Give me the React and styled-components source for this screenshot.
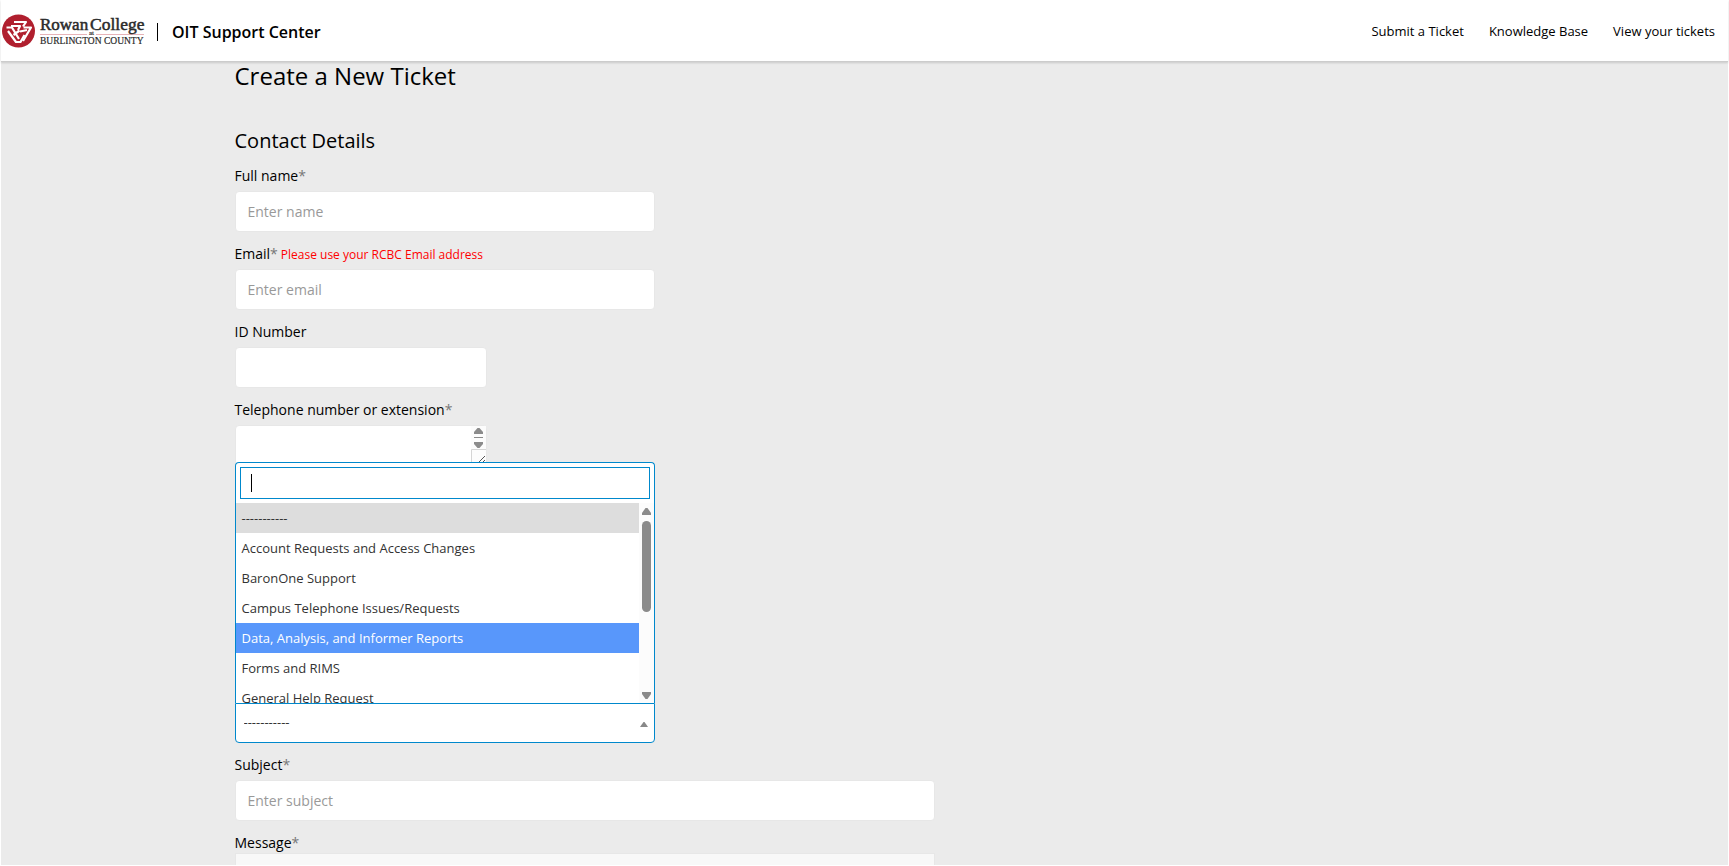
import React from "react";
import styled, { createGlobalStyle } from "styled-components";

const GlobalStyle = createGlobalStyle`
  *, *::before, *::after { box-sizing: border-box; }
  body { margin: 0; background: #fff; }
  body, input, textarea, select { font-family: "Open Sans", sans-serif; }
`;

const Page = styled.div`
  height: 100vh;
  overflow: hidden;
  display: flex;
  flex-direction: column;
  padding: 0 1px 1px;
  color: #000;
  font-size: 14px;
`;

const Header = styled.header`
  flex: none;
  height: 62px;
  display: flex;
  align-items: center;
  justify-content: space-between;
  padding-right: 13px;
  background: #fff;
  border-bottom: 1px solid #ccc;
  box-shadow: 0 1px 2px rgba(0, 0, 0, 0.15);
  z-index: 1;
`;

const Brand = styled.div`
  display: flex;
  align-items: center;
`;

const LogoLink = styled.a`
  display: block;
  height: 34px;
`;

const Divider = styled.span`
  width: 1px;
  height: 18px;
  margin: 2px 14px 0 12px;
  background: #000;
`;

const BrandName = styled.span`
  font-size: 16px;
  line-height: 24px;
  font-weight: 600;
  padding-top: 2px;
`;

const Nav = styled.nav`
  display: flex;
  gap: 25px;
`;

const NavLink = styled.a`
  color: #000;
  font-size: 13px;
  line-height: 20px;
  text-decoration: none;
`;

const Main = styled.main`
  flex: 1;
  min-height: 0;
  overflow: hidden;
  background: #ebebeb;
`;

const Form = styled.form`
  max-width: 1260px;
  margin: 0 auto;
`;

const Title = styled.h1`
  margin: 0;
  font-size: 24px;
  line-height: 28px;
  font-weight: 400;
`;

const SectionTitle = styled.h2`
  margin: 38px 0 12px;
  font-size: 20px;
  line-height: 26px;
  font-weight: 400;
`;

const Field = styled.div`
  height: 78px;
`;

const Label = styled.label`
  display: block;
  line-height: 20px;
  margin-bottom: 5px;
`;

const Required = styled.span`
  color: #777;
`;

const Hint = styled.span`
  margin-left: 3px;
  color: #f00;
  font-size: 12px;
  line-height: 12px;
`;

const widths = { small: "20%", medium: "33.34%", large: "55.56%" };

const Input = styled.input`
  display: block;
  width: ${(p) => widths[p.$size]};
  height: 41px;
  padding: 0 12px;
  border: 1px solid #e7e7e7;
  border-radius: 4px;
  background: #fff;
  font-size: 14px;
  outline: none;
  &::placeholder { color: #999; opacity: 1; }
`;

const PhoneBox = styled.div`
  position: relative;
  width: ${widths.small};
`;

const PhoneArea = styled.textarea`
  display: block;
  width: 100%;
  height: 41px;
  padding: 8px 12px;
  border: 1px solid #e7e7e7;
  border-radius: 4px;
  background: #fff;
  font-size: 14px;
  resize: none;
  overflow: hidden;
  outline: none;
`;

const PhoneScroll = styled.svg`
  position: absolute;
  top: 1px;
  right: 1px;
`;

const Picker = styled.div`
  position: relative;
  width: ${widths.medium};
  margin: 225px 0 12px;
`;

const PickerSelect = styled.select`
  display: block;
  appearance: none;
  width: 100%;
  height: 40px;
  padding: 0 8px 2px;
  border: 1px solid #0088cc;
  border-radius: 0 0 4px 4px;
  background: #fff;
  color: #333;
  font-size: 13px;
  outline: none;
`;

const PickerCaret = styled.svg`
  position: absolute;
  right: 7px;
  top: 19px;
  pointer-events: none;
`;

const Menu = styled.div`
  position: absolute;
  left: 0;
  right: 0;
  bottom: 100%;
  height: 241px;
  display: flex;
  flex-direction: column;
  border: 1px solid #0088cc;
  border-bottom: 0;
  border-radius: 4px 4px 0 0;
  background: #fff;
`;

const Search = styled.div`
  padding: 4px;
`;

const SearchInput = styled.input`
  display: block;
  width: 100%;
  height: 32px;
  padding: 0 10px;
  border: 1px solid #0088cc;
  background: #fff;
  font-size: 14px;
  outline: none;
`;

const Caret = styled.span`
  position: absolute;
  left: 15px;
  top: 11px;
  width: 1px;
  height: 18px;
  background: #000;
`;

const ListArea = styled.div`
  flex: 1;
  min-height: 0;
  display: flex;
`;

const List = styled.ul`
  flex: 1;
  margin: 0;
  padding: 0;
  overflow: hidden;
  list-style: none;
`;

const Option = styled.li`
  height: 30px;
  padding: 0 6px;
  font-size: 13px;
  line-height: 31px;
  color: ${(p) => (p.$highlighted ? "#fff" : "#333")};
  background: ${(p) => (p.$highlighted ? "#5897fb" : p.$selected ? "#ddd" : "transparent")};
`;

const Scrollbar = styled.div`
  width: 15px;
  display: flex;
  flex-direction: column;
  align-items: center;
  justify-content: space-between;
  padding: 5px 0 4px;
  background: #fcfcfc;
`;

const Thumb = styled.div`
  width: 9px;
  height: 91px;
  margin: 6px 0 auto;
  border-radius: 5px;
  background: #8b8b8b;
`;

const Message = styled.textarea`
  display: block;
  width: ${widths.large};
  height: 160px;
  padding: 8px 12px;
  border: 1px solid #e7e7e7;
  background: #f8f8f8;
  resize: none;
  outline: none;
`;

const MessageLabel = styled(Label)`
  margin-bottom: 0;
`;

const options = [
  "-----------",
  "Account Requests and Access Changes",
  "BaronOne Support",
  "Campus Telephone Issues/Requests",
  "Data, Analysis, and Informer Reports",
  "Forms and RIMS",
  "General Help Request",
];

function Logo() {
  return (
    <svg width="144" height="34" viewBox="0 0 144 34" role="img" aria-label="Rowan College at Burlington County">
      <circle cx="17.5" cy="17" r="16.5" fill="#b01f2e" />
      <g fill="none" stroke="#fff" strokeWidth="2.2" strokeLinejoin="round">
        <path d="M13 8h12l-3 4.500M10 12h9l-2 4M22.500 13.500H30L22 27M19 17.500l7-1.500" />
        <path d="M5.500 13.500H11l7 11.500M7 17l8 11h4.500l4-7M12.500 21l6-4.500" />
      </g>
      <path d="M39 20.500h47M95 20.500h48" stroke="#e6b3b8" />
      <g fill="#2b2b2b" stroke="#2b2b2b" fontFamily="Liberation Serif, serif">
        <text x="39" y="16" fontSize="17" strokeWidth="0.5">Rowan</text>
        <text x="89" y="16" fontSize="17.5" strokeWidth="0.5">College</text>
        <text x="88" y="21" fontSize="7" strokeWidth="0.2">at</text>
        <text x="39" y="30" fontSize="9.5" strokeWidth="0.2">BURLINGTON COUNTY</text>
      </g>
    </svg>
  );
}

function Arrow({ down }) {
  return (
    <svg width="9" height="7" viewBox="0 0 9 7" aria-hidden="true">
      <path d={down ? "M0 0h9v2L5.500 7h-2L0 2z" : "M0 7h9V5L5.500 0h-2L0 5z"} fill="#8b8b8b" />
    </svg>
  );
}

function TextField({ id, label, required, hint, size, placeholder }) {
  return (
    <Field>
      <Label htmlFor={id}>
        {label}
        {required && <Required>*</Required>}
        {hint && <Hint>{hint}</Hint>}
      </Label>
      <Input id={id} $size={size} placeholder={placeholder} />
    </Field>
  );
}

export default function App() {
  return (
    <Page>
      <GlobalStyle />
      <Header>
        <Brand>
          <LogoLink href="#home"><Logo /></LogoLink>
          <Divider />
          <BrandName>OIT Support Center</BrandName>
        </Brand>
        <Nav>
          <NavLink href="#submit">Submit a Ticket</NavLink>
          <NavLink href="#knowledge">Knowledge Base</NavLink>
          <NavLink href="#tickets">View your tickets</NavLink>
        </Nav>
      </Header>
      <Main>
        <Form>
          <Title>Create a New Ticket</Title>
          <SectionTitle>Contact Details</SectionTitle>
          <TextField id="name" label="Full name" required size="medium" placeholder="Enter name" />
          <TextField id="email" label="Email" required hint="Please use your RCBC Email address" size="medium" placeholder="Enter email" />
          <TextField id="idnumber" label="ID Number" size="small" />
          <Field>
            <Label htmlFor="phone">Telephone number or extension<Required>*</Required></Label>
            <PhoneBox>
              <PhoneArea id="phone" />
              <PhoneScroll width="15" height="39" viewBox="0 0 15 39" aria-hidden="true">
                <path d="M0 0h15v39H0z" fill="#fcfcfc" />
                <path d="M3 8h9V6L8.500 2h-2L3 6zM3 16h9v2l-3.500 4h-2L3 18zM3 11h9v1H3z" fill="#8b8b8b" />
                <path d="M.5 39V23.500H15" fill="none" stroke="#d5d5d5" />
                <path d="M8 36l6-6M12 36l2-2" stroke="#555" />
              </PhoneScroll>
            </PhoneBox>
          </Field>
          <Picker>
            <PickerSelect aria-label="Category" defaultValue={options[0]}>
              {options.map((o) => <option key={o}>{o}</option>)}
            </PickerSelect>
            <PickerCaret width="8" height="5" viewBox="0 0 8 5" aria-hidden="true">
              <path d="M0 5h8L4.500 0h-1z" fill="#888" />
            </PickerCaret>
            <Menu>
              <Search>
                <SearchInput aria-label="Search categories" />
                <Caret />
              </Search>
              <ListArea>
                <List role="listbox" aria-label="Categories">
                  {options.map((o, i) => (
                    <Option key={o} role="option" aria-selected={i === 0} $selected={i === 0} $highlighted={i === 4}>{o}</Option>
                  ))}
                </List>
                <Scrollbar>
                  <Arrow />
                  <Thumb />
                  <Arrow down />
                </Scrollbar>
              </ListArea>
            </Menu>
          </Picker>
          <TextField id="subject" label="Subject" required size="large" placeholder="Enter subject" />
          <MessageLabel htmlFor="message">Message<Required>*</Required></MessageLabel>
          <Message id="message" />
        </Form>
      </Main>
    </Page>
  );
}
